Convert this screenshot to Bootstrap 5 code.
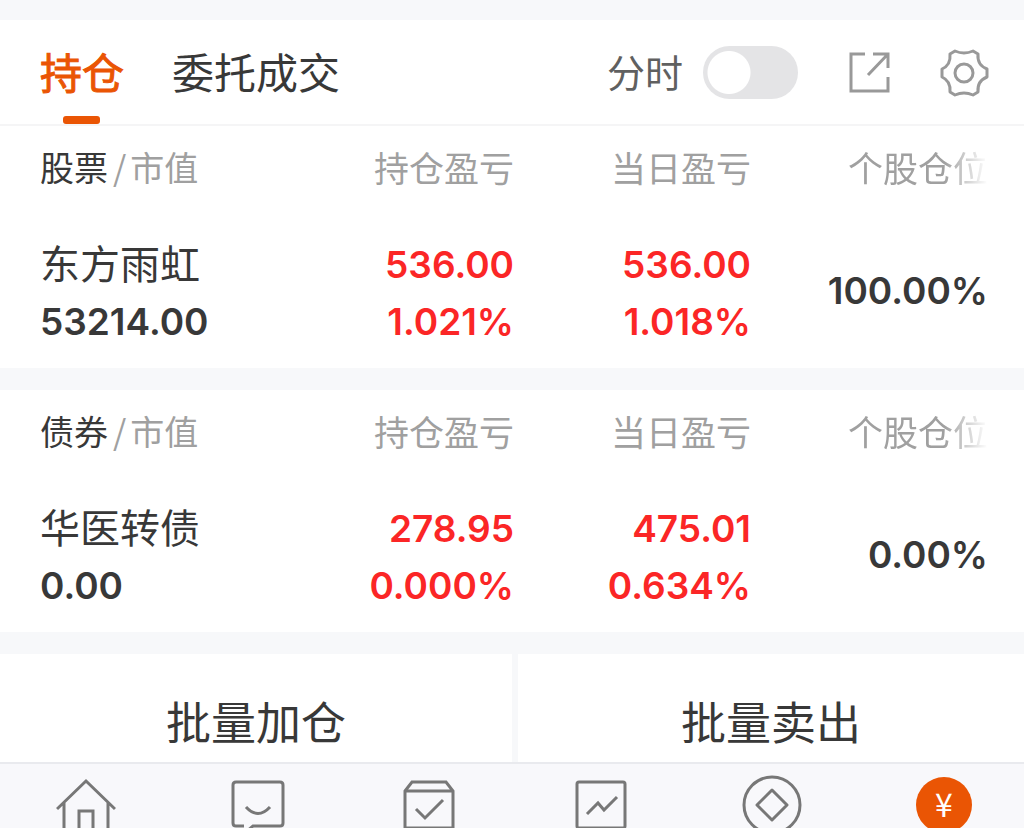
<!DOCTYPE html>
<html lang="zh-CN">
<head>
<meta charset="utf-8">
<meta name="viewport" content="width=device-width, initial-scale=1">
<title>持仓</title>
<link href="https://cdn.jsdelivr.net/npm/bootstrap@5.3.0/dist/css/bootstrap.min.css" rel="stylesheet">
<style>
  :root { --ink: #383838; --muted: #a0a0a0; --accent: #ea5504; --rise: #fb2626; --canvas: #f7f8fa; }
  body { font-family: Inter, "Noto Sans CJK SC", sans-serif; color: var(--ink); background: var(--canvas); }
  .topbar { padding: 0 34px 0 40px; height: 106px; margin-top: 20px; border-bottom: 2px solid #f5f5f6; }
  .tab-link { font-size: 42px; line-height: 100px; padding-top: 4px; color: var(--ink); text-decoration: none; position: relative; }
  .tab-link.active { color: var(--accent); -webkit-text-stroke: 1px var(--accent); }
  .tab-link.active::after { content: ""; position: absolute; left: 50%; bottom: 0; width: 37px; height: 8px; margin-left: -19px; border-radius: 3px; background: var(--accent); }
  .tabs { gap: 48px; }
  .switch-label { font-size: 38px; color: #606060; margin-right: 20px; padding-top: 2px; }
  .form-check-input.switch { width: 95px; height: 53px; margin: 0 50px 0 0; border: 0; border-radius: 27px; background: #e4e4e6 radial-gradient(circle at 26px 50%, #fff 21px, transparent 22px); }
  .form-check-input.switch:checked { background: var(--accent) radial-gradient(circle at 69px 50%, #fff 21px, transparent 22px); }
  .icon-btn { border: 0; padding: 0; background: none; line-height: 0; color: #999; }
  .icon-btn svg, .dock svg { fill: none; stroke: currentColor; stroke-width: 3; }
  .holding { padding: 0 36px 18px 40px; margin-bottom: 22px; }
  .holding table { table-layout: fixed; width: 100%; }
  .holding th, .holding td { padding: 0; width: 25%; }
  .holding thead th { font-size: 35px; line-height: 86px; font-weight: 400; color: var(--muted); white-space: nowrap; }
  .holding thead th:first-child { font-size: 34px; }
  .holding tbody td, .holding tbody th { padding-top: 24px; line-height: 57px; font-size: 37px; font-weight: 600; }
  .holding tbody .name { font-size: 40px; font-weight: 400; }
  .holding tbody .share { padding-top: 18px; }
  .kind { color: var(--ink); }
  .slash { font-family: "Noto Sans CJK SC", sans-serif; line-height: 1; margin: 0 4px 0 5px; }
  .rise { color: var(--rise); }
  .fade-end { -webkit-mask-image: linear-gradient(to left, transparent, #000 44px); mask-image: linear-gradient(to left, transparent, #000 44px); }
  .actions { gap: 6px; }
  .actions button { border: 0; background: #fff; color: var(--ink); font-size: 45px; line-height: 68px; padding: 36px 0 4px; }
  .dock { border-top: 2px solid #e9eaee; background: #f8f8fb; padding: 10px 50px 10px 56px; color: #777; }
  .dock a { color: inherit; line-height: 0; }
  .dock text { font: 400 32px "Noto Sans CJK SC", sans-serif; fill: #fff; stroke: none; text-anchor: middle; }
</style>
</head>
<body>
<div class="vh-100 overflow-hidden d-flex flex-column">
  <header class="topbar bg-white d-flex align-items-center justify-content-between flex-shrink-0">
    <nav class="tabs d-flex">
      <a class="tab-link active" href="#" aria-current="page">持仓</a>
      <a class="tab-link" href="#">委托成交</a>
    </nav>
    <div class="d-flex align-items-center">
      <label class="switch-label" for="intraday">分时</label>
      <input class="form-check-input switch" type="checkbox" role="switch" id="intraday">
      <button class="icon-btn me-5" type="button" aria-label="分享">
        <svg width="44" height="44" viewBox="0 0 44 44"><path d="M17 4H3V41H40V27M25 4H40V18M40 4L20 25"/></svg>
      </button>
      <button class="icon-btn" type="button" aria-label="设置">
        <svg width="50" height="50" viewBox="0 0 50 50"><circle cx="24" cy="26" r="9"/><path stroke-linejoin="round" d="M15 4Q24 8 33 4L38 7Q37 18 47 22V30Q37 34 38 45L33 48Q24 44 15 48L10 45Q11 34 2 30V22Q11 18 10 7Z"/></svg>
      </button>
    </div>
  </header>

  <section class="holding bg-white flex-shrink-0">
    <table>
      <thead><tr><th scope="col"><span class="kind">股票</span><span class="slash">/</span>市值</th><th scope="col" class="text-end">持仓盈亏</th><th scope="col" class="text-end">当日盈亏</th><th scope="col" class="text-end fade-end">个股仓位</th></tr></thead>
      <tbody><tr>
        <th scope="row"><div class="name">东方雨虹</div><div>53214.00</div></th>
        <td class="text-end rise"><div>536.00</div><div>1.021%</div></td>
        <td class="text-end rise"><div>536.00</div><div>1.018%</div></td>
        <td class="text-end share">100.00%</td>
      </tr></tbody>
    </table>
  </section>

  <section class="holding bg-white flex-shrink-0">
    <table>
      <thead><tr><th scope="col"><span class="kind">债券</span><span class="slash">/</span>市值</th><th scope="col" class="text-end">持仓盈亏</th><th scope="col" class="text-end">当日盈亏</th><th scope="col" class="text-end fade-end">个股仓位</th></tr></thead>
      <tbody><tr>
        <th scope="row"><div class="name">华医转债</div><div>0.00</div></th>
        <td class="text-end rise"><div>278.95</div><div>0.000%</div></td>
        <td class="text-end rise"><div>475.01</div><div>0.634%</div></td>
        <td class="text-end share">0.00%</td>
      </tr></tbody>
    </table>
  </section>

  <div class="actions d-flex flex-shrink-0">
    <button class="w-50 flex-shrink-0" type="button">批量加仓</button>
    <button class="flex-fill" type="button">批量卖出</button>
  </div>

  <nav class="dock d-flex justify-content-between flex-shrink-0">
    <a href="#" aria-label="首页"><svg width="60" height="60" viewBox="0 0 60 60"><path d="M1 35L30 7L59 35M8 29V60M52 29V60M23 60V37H37V60"/></svg></a>
    <a href="#" aria-label="消息"><svg width="60" height="60" viewBox="0 0 60 60"><path d="M16 52H8Q5 52 5 49V11Q5 8 8 8H52Q55 8 55 11V49Q55 52 52 52H25L18 58M18 33Q30 46 42 33"/></svg></a>
    <a href="#" aria-label="任务"><svg width="60" height="60" viewBox="0 0 60 60"><path d="M6 17L13 8H47L54 17V54H6ZM6 17H54M17 35L26 44L44 26"/></svg></a>
    <a href="#" aria-label="行情"><svg width="60" height="60" viewBox="0 0 60 60"><rect x="6" y="8" width="48" height="46" rx="2"/><path d="M16 40L27 29L33 36L46 23"/></svg></a>
    <a href="#" aria-label="理财"><svg width="60" height="60" viewBox="0 0 60 60"><circle cx="30" cy="31" r="28"/><path stroke-linejoin="round" d="M30 16L45 31L30 46L15 31Z"/></svg></a>
    <a href="#" aria-label="交易"><svg width="60" height="60" viewBox="0 0 60 60"><circle cx="30" cy="31" r="28" fill="#ea5504" stroke="none"/><text x="30" y="43">¥</text></svg></a>
  </nav>
</div>
<script src="https://cdn.jsdelivr.net/npm/bootstrap@5.3.0/dist/js/bootstrap.bundle.min.js"></script>
</body>
</html>
